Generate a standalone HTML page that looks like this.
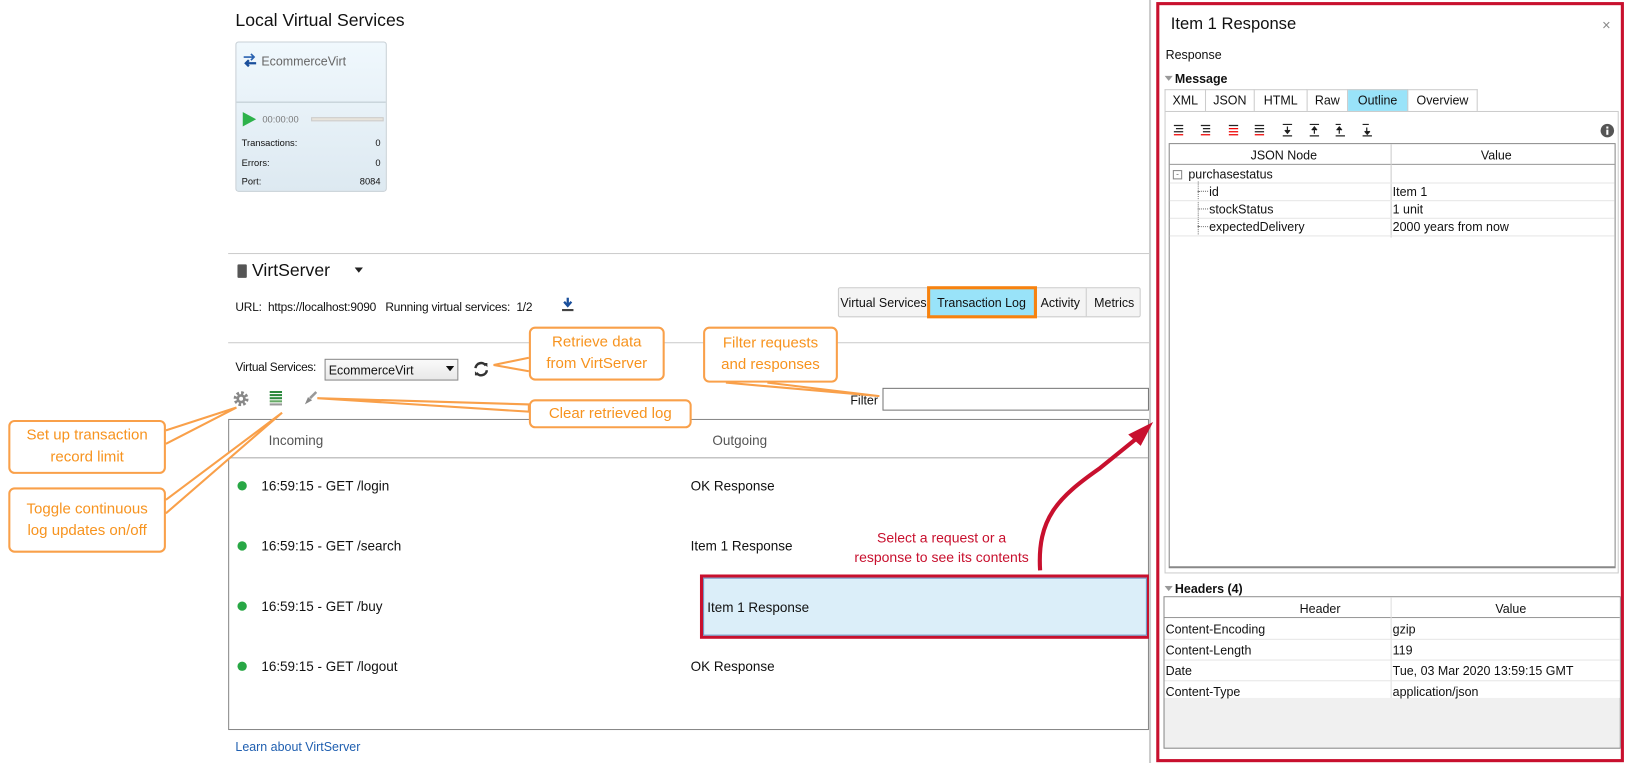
<!DOCTYPE html>
<html><head><meta charset="utf-8"><style>
*{box-sizing:border-box;margin:0;padding:0}
html,body{width:1626px;height:763px;overflow:hidden;background:#fff}
#w{position:absolute;left:0;top:0;width:1568px;height:736px;transform:scale(1.03699);transform-origin:0 0;font-family:"Liberation Sans",sans-serif;color:#111}
.a{position:absolute;white-space:nowrap}
.s{font-size:12px}
.co{position:absolute;border:2px solid #f9a04a;border-radius:6px;background:#fff;color:#f7931e;font-size:14.5px;text-align:center;line-height:21px;display:flex;align-items:center;justify-content:center}
.tab{position:absolute;top:0;height:100%;border-right:1px solid #ccc;font-size:12px;display:flex;align-items:center;justify-content:center}
.hl{position:absolute;left:0;right:0;border-top:1px solid #e6e6e6}
</style></head><body><div id="w">
<div class="a" style="left:227px;top:10px;font-size:17px">Local Virtual Services</div>
<div class="a" style="left:227px;top:40px;width:146px;height:145px;border:1px solid #c8d0d6;border-radius:3px;background:linear-gradient(#f0f8fd,#dde9f1)">
 <svg class="a" style="left:5px;top:9px" width="16" height="16" viewBox="0 0 16 16"><path d="M2 5h10M9 2l3 3-3 3" stroke="#2a62b0" stroke-width="1.6" fill="none"/><path d="M14 11H4M7 8l-3 3 3 3" stroke="#1a4f9c" stroke-width="2.2" fill="none"/></svg>
 <div class="a" style="left:24px;top:11px;font-size:12px;color:#666">EcommerceVirt</div>
 <div class="a" style="left:0;right:0;top:57px;border-top:1px solid #bcc7cf"></div>
 <svg class="a" style="left:6px;top:67px" width="13" height="14"><path d="M0 0L13 7 0 14z" fill="#2db24a"/></svg>
 <div class="a" style="left:25px;top:69px;font-size:9px;color:#777">00:00:00</div>
 <div class="a" style="left:72px;top:72px;width:70px;height:4px;background:#e8e4dc;border:1px solid #ccc"></div>
 <div class="a" style="left:5px;top:92px;font-size:9px">Transactions:</div><div class="a" style="right:5px;top:92px;font-size:9px">0</div>
 <div class="a" style="left:5px;top:111px;font-size:9px">Errors:</div><div class="a" style="right:5px;top:111px;font-size:9px">0</div>
 <div class="a" style="left:5px;top:129px;font-size:9px">Port:</div><div class="a" style="right:5px;top:129px;font-size:9px">8084</div>
</div>
<div class="a" style="left:220px;top:244px;width:888px;border-top:1px solid #ccc"></div>
<div class="a" style="left:229px;top:255px;width:9px;height:13px;background:#555;border-radius:1px"></div>
<div class="a" style="left:243px;top:251px;font-size:17px">VirtServer</div>
<svg class="a" style="left:342px;top:258px" width="8" height="5"><path d="M0 0h8L4 5z" fill="#222"/></svg>
<div class="a" style="left:227px;top:291px;font-size:11.5px;letter-spacing:-0.2px">URL:&nbsp; https://localhost:9090 &nbsp;&nbsp;Running virtual services:&nbsp; 1/2</div>
<svg class="a" style="left:541px;top:287px" width="13" height="14"><path d="M6.5 0v7M3 4l3.5 4 3.5-4" stroke="#1a4f9c" stroke-width="2.2" fill="none"/><path d="M1 12h11" stroke="#444" stroke-width="2"/></svg>
<div class="a" style="left:808px;top:277px;width:292px;height:29px;border:1px solid #ccc;background:#f4f4f4;border-radius:2px">
 <div class="tab" style="left:0;width:87px">Virtual Services</div>
 <div class="tab" style="left:87px;width:102px;background:#99e3f9;outline:3px solid #f7820f;outline-offset:-1px">Transaction Log</div>
 <div class="tab" style="left:189px;width:50px">Activity</div>
 <div class="tab" style="left:239px;width:53px;border:0">Metrics</div>
</div>
<div class="a" style="left:220px;top:330px;width:888px;border-top:1px solid #ccc"></div>
<div class="a" style="left:227px;top:349px;font-size:11.5px;letter-spacing:-0.3px">Virtual Services:</div>
<div class="a s" style="left:313px;top:346px;width:129px;height:21px;border:1px solid #888;background:linear-gradient(#fafafa,#e8e8e8);padding:3px 0 0 3px">EcommerceVirt</div>
<svg class="a" style="left:430px;top:353px" width="8" height="5"><path d="M0 0h8L4 5z" fill="#111"/></svg>
<svg class="a" style="left:456px;top:348px" width="16" height="16" viewBox="0 0 16 16"><path d="M2.5 7A5.5 5.5 0 0 1 12.5 4.5M13.5 9A5.5 5.5 0 0 1 3.5 11.5" stroke="#333" stroke-width="2.4" fill="none"/><path d="M10 2l4 0 0 4zM6 14l-4 0 0-4z" fill="#333"/></svg>
<svg class="a" style="left:224px;top:376px" width="17" height="17" viewBox="0 0 16 16"><circle cx="8" cy="8" r="5" fill="none" stroke="#888" stroke-width="3.5" stroke-dasharray="2.2 1.7"/><circle cx="8" cy="8" r="4.2" fill="#888"/><circle cx="8" cy="8" r="1.8" fill="#fff"/></svg>
<svg class="a" style="left:260px;top:377px" width="12" height="15"><g fill="#2c8a3e"><rect y="0" width="12" height="2"/><rect y="3" width="12" height="2"/><rect y="6" width="12" height="2"/><rect y="9" width="12" height="2" fill="#6a6"/><rect y="12" width="12" height="2" fill="#999"/></g></svg>
<svg class="a" style="left:292px;top:377px" width="14" height="14"><path d="M13 1L7 7" stroke="#999" stroke-width="2.5"/><path d="M2 13l3-7 4 3z" fill="#888"/></svg>
<div class="a s" style="left:820px;top:379px">Filter</div>
<div class="a" style="left:851px;top:374px;width:257px;height:22px;border:1px solid #777"></div>
<div class="a" style="left:220px;top:404px;width:888px;height:300px;border:1px solid #888">
 <div class="a" style="left:38px;top:12px;font-size:13px;color:#555">Incoming</div>
 <div class="a" style="left:466px;top:12px;font-size:13px;color:#555">Outgoing</div>
 <div class="a" style="left:0;right:0;top:36px;border-top:1px solid #aaa"></div>
</div>
<div class="a" style="left:229px;top:464px;width:9px;height:9px;border-radius:50%;background:#28a745"></div>
<div class="a" style="left:229px;top:522px;width:9px;height:9px;border-radius:50%;background:#28a745"></div>
<div class="a" style="left:229px;top:580px;width:9px;height:9px;border-radius:50%;background:#28a745"></div>
<div class="a" style="left:229px;top:638px;width:9px;height:9px;border-radius:50%;background:#28a745"></div>
<div class="a" style="left:252px;top:461px;font-size:13px">16:59:15 - GET /login</div>
<div class="a" style="left:252px;top:519px;font-size:13px">16:59:15 - GET /search</div>
<div class="a" style="left:252px;top:577px;font-size:13px">16:59:15 - GET /buy</div>
<div class="a" style="left:252px;top:635px;font-size:13px">16:59:15 - GET /logout</div>
<div class="a" style="left:666px;top:461px;font-size:13px">OK Response</div>
<div class="a" style="left:666px;top:519px;font-size:13px">Item 1 Response</div>
<div class="a" style="left:675px;top:554px;width:434px;height:62px;border:3px solid #c8102e"><div style="position:absolute;inset:0;border:1px solid #6c8ebf;background:#dbeef9;font-size:13px;padding:20px 0 0 3px">Item 1 Response</div></div>
<div class="a" style="left:666px;top:635px;font-size:13px">OK Response</div>
<div class="a s" style="left:227px;top:713px;color:#1f5fb0">Learn about VirtServer</div>
<div class="a" style="left:1108px;top:0;width:2px;height:736px;background:#ccc"></div>
<div class="a" style="left:800px;top:509px;width:216px;text-align:center;color:#c8102e;font-size:13.5px;line-height:19px">Select a request or a<br>response to see its contents</div>
<!-- right panel -->
<div class="a" style="left:1115px;top:2px;width:451px;height:733px;border:3px solid #c8102e">
 <div class="a" style="left:11px;top:10px;font-size:16px">Item 1 Response</div>
 <div class="a" style="left:427px;top:11px;font-size:14px;color:#888">×</div>
 <div class="a s" style="left:6px;top:41px">Response</div>
 <svg class="a" style="left:5px;top:68px" width="8" height="5"><path d="M0 0h8L4 5z" fill="#999"/></svg>
 <div class="a s" style="left:15px;top:64px;font-weight:bold">Message</div>
 <div class="a" style="left:5px;top:81px;width:302px;height:21px">
  <div class="tab" style="left:0;width:40px;border:1px solid #ccc;border-bottom:0">XML</div>
  <div class="tab" style="left:40px;width:47px;border:1px solid #ccc;border-bottom:0;border-left:0">JSON</div>
  <div class="tab" style="left:87px;width:51px;border:1px solid #ccc;border-bottom:0;border-left:0">HTML</div>
  <div class="tab" style="left:138px;width:39px;border:1px solid #ccc;border-bottom:0;border-left:0">Raw</div>
  <div class="tab" style="left:177px;width:58px;background:#99e3f9;border-top:1px solid #ccc">Outline</div>
  <div class="tab" style="left:235px;width:67px;border:1px solid #ccc;border-bottom:0;border-left:0">Overview</div>
 </div>
 <div class="a" style="left:5px;top:102px;width:438px;height:446px;border:1px solid #ccc"></div>
 <svg class="a" style="left:12px;top:114px" width="200" height="13">
  <g stroke-width="1.2"><path d="M2 2h9M4 5h7M2 8h9" stroke="#222"/><path d="M2 11h9" stroke="#e00"/>
  <path d="M28 2h9M30 5h7M30 8h7" stroke="#222"/><path d="M28 11h9" stroke="#e00"/>
  <path d="M55 2h9" stroke="#222"/><path d="M55 5h9M55 8h9M55 11h9" stroke="#e00"/>
  <path d="M80 2h9M80 5h9M80 8h9" stroke="#222"/><path d="M80 11h9" stroke="#e00"/>
  <path d="M107 1h9M111.5 3v6M109 6.5l2.5 3 2.5-3M107 12h9" stroke="#222"/>
  <path d="M133 1h9M137.5 4v6M135 6.5l2.5-3 2.5 3M133 12h9" stroke="#222"/>
  <path d="M158 12h9M161.5 4v6M159 6.5l2.5-3 2.5 3M158 1h5" stroke="#222"/>
  <path d="M184 1h6M188 4v6M186 7.5l2.5 3 2.5-3M184 12h9" stroke="#222"/></g></svg>
 <svg class="a" style="left:425px;top:114px" width="14" height="14"><circle cx="7" cy="7" r="6.5" fill="#555"/><rect x="6" y="6" width="2" height="5" fill="#fff"/><rect x="6" y="3" width="2" height="2" fill="#fff"/></svg>
 <div class="a" style="left:9px;top:133px;width:431px;height:410px;border:1px solid #888;border-bottom-width:2px">
  <div class="a" style="left:0;right:0;top:0;height:20px;border-bottom:1px solid #999"></div>
  <div class="a" style="left:213px;top:0;height:90px;border-left:1px solid #ccc"></div>
  <div class="a s" style="left:60px;top:4px;width:100px;text-align:center">JSON Node</div>
  <div class="a s" style="left:300px;top:4px">Value</div>
  <div class="a" style="left:3px;top:25px;width:9px;height:9px;border:1px solid #888;font-size:8px;line-height:6px;text-align:center;color:#555">-</div>
  <div class="a s" style="left:18px;top:22px">purchasestatus</div>
  <div class="a" style="left:27px;top:36px;height:51px;border-left:1px dotted #777"></div>
  <div class="a" style="left:27px;top:45px;width:10px;border-top:1px dotted #777"></div>
  <div class="a" style="left:27px;top:62px;width:10px;border-top:1px dotted #777"></div>
  <div class="a" style="left:27px;top:79px;width:10px;border-top:1px dotted #777"></div>
  <div class="a s" style="left:38px;top:39px">id</div><div class="a s" style="left:215px;top:39px">Item 1</div>
  <div class="a s" style="left:38px;top:56px">stockStatus</div><div class="a s" style="left:215px;top:56px">1 unit</div>
  <div class="a s" style="left:38px;top:73px">expectedDelivery</div><div class="a s" style="left:215px;top:73px">2000 years from now</div>
  <div class="hl" style="top:37px"></div><div class="hl" style="top:54px"></div><div class="hl" style="top:71px"></div><div class="hl" style="top:88px"></div>
 </div>
 <svg class="a" style="left:5px;top:560px" width="8" height="5"><path d="M0 0h8L4 5z" fill="#999"/></svg>
 <div class="a s" style="left:15px;top:556px;font-weight:bold">Headers (4)</div>
 <div class="a" style="left:4px;top:570px;width:441px;height:147px;border:1px solid #888;background:#f0f0f0">
  <div class="a" style="left:0;right:0;top:0;height:97px;background:#fff"></div>
  <div class="a" style="left:0;right:0;top:0;height:20px;border-bottom:1px solid #999"></div>
  <div class="a" style="left:218px;top:0;height:97px;border-left:1px solid #ddd"></div>
  <div class="a s" style="left:120px;top:4px;width:60px;text-align:center">Header</div>
  <div class="a s" style="left:319px;top:4px">Value</div>
  <div class="a s" style="left:1px;top:24px">Content-Encoding</div><div class="a s" style="left:220px;top:24px">gzip</div>
  <div class="a s" style="left:1px;top:44px">Content-Length</div><div class="a s" style="left:220px;top:44px">119</div>
  <div class="a s" style="left:1px;top:64px">Date</div><div class="a s" style="left:220px;top:64px">Tue, 03 Mar 2020 13:59:15 GMT</div>
  <div class="a s" style="left:1px;top:84px">Content-Type</div><div class="a s" style="left:220px;top:84px">application/json</div>
  <div class="hl" style="top:40px"></div><div class="hl" style="top:60px"></div><div class="hl" style="top:80px"></div>
 </div>
</div>
<!-- callout lines -->
<svg class="a" style="left:0;top:0" width="1568" height="736">
 <g stroke="#f9a04a" stroke-width="2" fill="#fff">
  <path d="M160 415 L228 393 L160 428"/>
  <path d="M160 482 L272 398 L160 495"/>
  <path d="M306 384 L510 390 L510 397 Z"/>
  <path d="M510 345 L476 352 L510 358"/>
  <path d="M700 369 L848 382 L740 369"/>
 </g>
 <path d="M1003 550 C1000 500 1020 480 1060 452 L1102 418" stroke="#c8102e" stroke-width="4" fill="none"/>
 <path d="M1112 407 L1088 419 L1100 430 Z" fill="#c8102e"/>
</svg>
<div class="co" style="left:510px;top:315px;width:131px;height:52px">Retrieve data<br>from VirtServer</div>
<div class="co" style="left:678px;top:315px;width:130px;height:54px">Filter requests<br>and responses</div>
<div class="co" style="left:510px;top:385px;width:157px;height:28px">Clear retrieved log</div>
<div class="co" style="left:8px;top:405px;width:152px;height:52px">Set up transaction<br>record limit</div>
<div class="co" style="left:8px;top:470px;width:152px;height:63px">Toggle continuous<br>log updates on/off</div>
</div></body></html>
